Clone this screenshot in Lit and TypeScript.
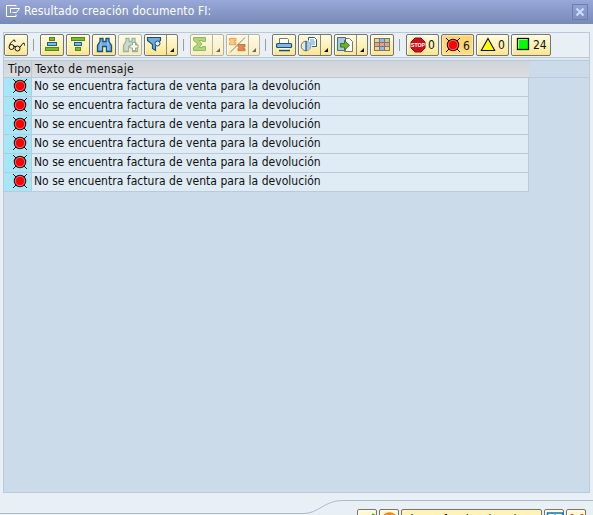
import { LitElement, html, css, svg } from "lit";
import { customElement, property } from "lit/decorators.js";

const statusIcon = svg`<path d="M1 1l3 3M15 1l-3 3M1 15l3-3M15 15l-3-3" stroke="#111" stroke-width="1"/><circle cx="8" cy="8" r="5.700" fill="#f00" stroke="#111" stroke-width="1.100"/><circle cx="8" cy="8" r="4.700" fill="none" stroke="#e88a8a" stroke-width=".8"/>`;
const binoculars = (fill: string, line: string) => svg`<path d="M4 1.500h3v3h3v-3h3v3l2.500 4v6h-5v-5h-4v5h-5v-6L4 4.500z" fill="${fill}" stroke="${line}" stroke-width="1.300"/><path d="M5 5v8M12 5v8" stroke="#b9d6f2" stroke-width=".8"/>`;

const icons: Record<string, unknown> = {
  glasses: svg`<g fill="none" stroke="#111" stroke-width="1"><circle cx="3.500" cy="10" r="2.500"/><circle cx="9.500" cy="11.500" r="2.500"/><path d="M5.800 9.500q1.500-1 2 .500M1.300 9Q2 6 5 3.500q1.500-1.500 2 .500v1M11.800 10.500l3-4q1.500-1.500 1.700 1v1"/></g>`,
  asc: svg`<g stroke-width="1"><rect x="5.500" y=".5" width="5" height="3" fill="#7eb733" stroke="#4d8a1c"/><rect x="3.500" y="5.500" width="9" height="3" fill="#8ab5de" stroke="#14618d"/><rect x="1.500" y="10.500" width="13" height="3" fill="#7eb733" stroke="#4d8a1c"/></g>`,
  desc: svg`<g stroke-width="1"><rect x="1.500" y=".5" width="13" height="3" fill="#7eb733" stroke="#4d8a1c"/><rect x="4.500" y="5.500" width="7" height="3" fill="#8ab5de" stroke="#14618d"/><rect x="5.500" y="10.500" width="5" height="3" fill="#7eb733" stroke="#4d8a1c"/></g>`,
  find: binoculars("#74a9dd", "#14557f"),
  findNext: svg`<g opacity=".6">${binoculars("#a9c8bc", "#5b8d84")}</g><path d="M10.500 5.500h3v2.500h2.500v3h-2.500v2.500h-3V11H8V8h2.500z" fill="#fff" stroke="#9aa68e"/>`,
  filter: svg`<path d="M.5 .5h13v3L8.500 7.500v6l-3-2v-4l-5-4z" fill="#74a9dd" stroke="#14557f" stroke-width="1.200"/><circle cx="10.500" cy="6.500" r="2.500" fill="#dbeaf5" stroke="#14557f"/>`,
  sum: svg`<path d="M.5 .5h12v4h-3v-1H6l3 3.500-3 3.500h3.500v-1h3v4H.5v-3L5 7 .5 3.500z" fill="#b3d577" stroke="#8db866"/>`,
  subtotal: svg`<path d="M1 15.500L16 .5" stroke="#777" stroke-width=".9"/><path d="M.5 1.500h6.500v2.200h-2l1 1-1 1h2v2H.500v-2l1-1-1-1z" fill="#f8c987" stroke="#eea050"/><path d="M9 7.500h7v2.200h-2l1 1-1 1h2v2H9v-2l1-1-1-1z" fill="#e08a52" stroke="#cc7442"/>`,
  print: svg`<path d="M3.500 6.500v-5h8l1 1v4" fill="#fff" stroke="#777"/><rect x=".6" y="6.500" width="15" height="4" rx="1" fill="#8ab5de" stroke="#14557f" stroke-width="1.200"/><path d="M3 13.500h11" stroke="#14557f" stroke-width="1.600"/><path d="M3 11.800h10" stroke="#fff"/>`,
  views: svg`<path d="M7.500 3.500v-3h6l2 2v7H11" fill="#fff" stroke="#14618d"/><path d="M9 3h4M9 5h5M10 7h4" stroke="#5c94bd"/><circle cx="5" cy="9" r="4.800" fill="#e7e9dd" stroke="#777"/><path d="M5 4.200a4.800 4.800 0 0 1 0 9.600z" fill="#a9cbea"/><path d="M5 4v10" stroke="#14557f" stroke-width="1.200"/>`,
  export: svg`<path d="M8.500 1.500h4l3 3v10h-8z" fill="#fff" stroke="#777"/><path d="M.5 .5h8v13h-8z" fill="#a9c8e4" stroke="#456f91"/><path d="M3.500 6.500h4v-3l5 4.800-5 4.800v-3h-4z" fill="#6cb22f" stroke="#397a16"/>`,
  layout: svg`<rect x="0" y="1" width="16" height="13" fill="#777"/>${[["#f6d67c", "#91b9e5", "#b7d277"], ["#e9a08a", "#e9a08a", "#e9a08a"], ["#f6d67c", "#91b9e5", "#f6d67c"]].map((r, y) => r.map((c, x) => svg`<rect x="${1 + x * 5}" y="${2 + y * 4}" width="4" height="3" fill="${c}"/>`))}`,
  stop: svg`<path d="M5 1h6l4 4v6l-4 4H5l-4-4V5z" fill="#c8101a" stroke="#b0000a"/><text x="8" y="10" text-anchor="middle" font-size="5.200" font-weight="700" fill="#fff">STOP</text>`,
  error: statusIcon,
  warning: svg`<path d="M8 1.500L14.700 13.500H1.300z" fill="#ff0" stroke="#111" stroke-width="1.100"/>`,
  ok: svg`<rect x="2.500" y="1.500" width="11" height="11" fill="#0f0" stroke="#111" stroke-width="1.300"/><path d="M3.500 11.500v-9h9" fill="none" stroke="#a8e8a8"/>`,
  check: svg`<path d="M4 9l3 4 6-11" fill="none" stroke="#5d9c3c" stroke-width="3"/>`,
  help: svg`<circle cx="6.500" cy="8" r="7" fill="#ffc928" stroke="#ee7a1c" stroke-width="1.500"/><path d="M3.500 6.500q0-3.500 3-3.500t3 3q0 2-3 3" fill="none" stroke="#e0601c" stroke-width="1.500"/>`,
  info: svg`<rect x="-.5" y="1" width="15" height="14" fill="#fff" stroke="#0b77bd" stroke-width="1.500"/><path d="M7 2.500v2M5 7h3v6" stroke="#0b77bd" stroke-width="2"/>`,
  cancel: svg`<path d="M2 4l9 9M12 4L2 13" stroke="#b8402a" stroke-width="4" stroke-linecap="round"/><path d="M2.500 3.500l8 8M11.500 3.500l-8 8" stroke="#e98570"/>`,
};

@customElement("tool-button")
class ToolButton extends LitElement {
  @property() icon = "";
  @property() label = "";
  @property({ type: Boolean, reflect: true }) menu = false;
  @property({ type: Boolean, reflect: true }) active = false;
  @property({ type: Boolean, reflect: true }) disabled = false;
  static styles = css`
    :host { display: flex; flex: none; box-sizing: border-box; width: 24px; height: 22px; border: 1px solid #77756b; border-radius: 2px; background: linear-gradient(#fffbe0, #fdf1b4 55%, #fae48f); box-shadow: inset 1px 1px #fffdf0; }
    :host([menu]) { width: 34px; }
    :host([active]) { background: linear-gradient(#ffd36e, #ffdc83); box-shadow: inset 0 0 0 1px #ffe9ac; }
    :host([disabled]) { border-color: #b5b39d; background: linear-gradient(#fdf9e4, #f8edc0); }
    .icon { flex: none; width: 17px; height: 16px; margin: 2px 0 0 3px; overflow: visible; font-family: "Liberation Sans", sans-serif; }
    :host([menu]) .icon { margin-left: 2px; }
    .label { margin: 3px 0 0 1px; font: 12px/15px "DejaVu Sans Condensed", "DejaVu Sans", sans-serif; font-stretch: condensed; color: #111; }
    :host([active]) .label { margin-top: 4px; }
    .drop { width: 10px; margin-left: 2px; border-left: 1px solid #8c897a; display: flex; align-items: flex-end; }
    .drop svg { width: 4px; height: 4px; margin: 0 0 3px 3px; }
    :host([disabled]) .drop { opacity: .6; }
  `;
  render() {
    return html`<svg class="icon" viewBox="0 0 17 16" fill="none">${icons[this.icon]}</svg>
      ${this.label ? html`<span class="label">${this.label}</span>` : ""}
      ${this.menu ? html`<span class="drop"><svg viewBox="0 0 4 4"><path d="M4 0v4H0z" fill="#111"/></svg></span>` : ""}`;
  }
}

@customElement("app-root")
class AppRoot extends LitElement {
  static styles = css`
    :host { display: flex; flex-direction: column; width: 593px; height: 515px; overflow: hidden; background: #e8f0f6; font: 12px/15px "DejaVu Sans Condensed", "DejaVu Sans", sans-serif; font-stretch: condensed; color: #111; }
    .title { flex: none; display: flex; box-sizing: border-box; height: 24px; padding: 3px 5px 0 6px; background: linear-gradient(#98a9d9, #7888b7); color: #fff; }
    .title .exit { width: 15px; height: 12px; margin: 2px 3px 0 0; }
    .title .name { flex: 1; padding-top: 1px; white-space: nowrap; letter-spacing: .12px; }
    .title .close { width: 16px; height: 16px; margin-top: 1px; }
    .panel { flex: none; box-sizing: border-box; width: 587px; height: 461px; margin: 8px 0 0 3px; border: 1px solid #bbc9da; background: #cbdbea; }
    .tools { display: flex; box-sizing: border-box; height: 25px; padding: 1px 0 0; gap: 2px; background: #e8f0f6; border-bottom: 1px solid #bbc9da; }
    .tick { flex: none; width: 1px; height: 12px; margin: 5px 4px 0 3px; background: #9a9fa4; }
    .grid { width: 525px; }
    .strip { height: 2px; background: #dde7f0; border-bottom: 1px solid #bbc9da; }
    .rest { height: 17px; box-sizing: border-box; border-bottom: 1px solid #bbc9da; }
    .head, .row { display: grid; grid-template-columns: 28px 1fr; box-sizing: border-box; border-bottom: 1px solid #bbc9da; }
    .band { display: grid; grid-template-columns: 525px 1fr; }
    .head { height: 17px; background: linear-gradient(#cfd4da, #dbdee1); }
    .row { height: 19px; background: #dfebf5; border-right: 1px solid #bbc9da; }
    .cell { box-sizing: border-box; white-space: nowrap; overflow: hidden; padding-left: 2px; }
    .head .cell { padding: 1px 0 0 3px; line-height: 14px; letter-spacing: .28px; }
    .head .first { padding-left: 4px; letter-spacing: 0; }
    .row .cell { padding-top: 1px; letter-spacing: .035px; }
    .cell.first { border-right: 1px solid #bbc9da; }
    .row .first { background: #a6e7f7; padding: 0 0 0 8px; }
    .state { display: block; width: 16px; height: 16px; }
    .footer { flex: 1; display: grid; min-height: 0; overflow: hidden; }
    .edge, .actions { grid-area: 1 / 1; }
    .edge { width: 593px; height: 22px; }
    .actions { display: flex; gap: 2px; padding: 16px 0 0 357px; }
    .actions tool-button { width: 20px; }
    .wide { display: flex; width: 141px; height: 22px; box-sizing: border-box; border: 1px solid #77756b; border-radius: 2px; background: #fff3ba; padding: 3px 5px; white-space: nowrap; }
    .wide svg { width: 10px; height: 14px; margin: 1px 5px 0 0; }
  `;
  render() {
    return html`
      <div class="title">
        <svg class="exit" viewBox="0 0 15 12" fill="none" stroke="#fff"><path d="M10 1.500V.500H.500v11H10v-2M4.500 8V3.500h9l-3 4h-4"/></svg>
        <span class="name">Resultado creación documento FI:</span>
        <svg class="close" viewBox="0 0 16 16" fill="none"><rect x=".5" y=".5" width="15" height="15" stroke="#6d7eae"/><path d="M4.500 4.500l7 7M11.500 4.500l-7 7" stroke="#c8dcff" stroke-width="2.200"/></svg>
      </div>
      <div class="panel">
        <div class="tools">
          <tool-button icon="glasses"></tool-button><i class="tick"></i>
          <tool-button icon="asc"></tool-button><tool-button icon="desc"></tool-button><tool-button icon="find"></tool-button>
          <tool-button icon="findNext" disabled></tool-button><tool-button icon="filter" menu></tool-button><i class="tick"></i>
          <tool-button icon="sum" menu disabled></tool-button><tool-button icon="subtotal" menu disabled></tool-button><i class="tick"></i>
          <tool-button icon="print"></tool-button><tool-button icon="views" menu></tool-button><tool-button icon="export" menu></tool-button><tool-button icon="layout"></tool-button><i class="tick"></i>
          <tool-button style="width:33px" icon="stop" label="0"></tool-button><tool-button style="width:33px" icon="error" label="6" active></tool-button>
          <tool-button style="width:33px" icon="warning" label="0"></tool-button><tool-button style="width:40px" icon="ok" label="24"></tool-button>
        </div>
        <div class="strip"></div>
        <div class="band">
          <div class="head"><span class="cell first">Tipo</span><span class="cell">Texto de mensaje</span></div>
          <div class="rest"></div>
        </div>
        <div class="grid">
          ${Array.from({ length: 6 }, () => html`<div class="row"><span class="cell first"><svg class="state" viewBox="0 0 16 16">${statusIcon}</svg></span><span class="cell">No se encuentra factura de venta para la devolución</span></div>`)}
        </div>
      </div>
      <div class="footer">
        <svg class="edge" viewBox="0 0 593 22" fill="none"><path d="M0 20.500H304C318 20.500 325 7.500 342 7.500H593" stroke="#afbcca"/></svg>
        <div class="actions"><tool-button icon="check"></tool-button><tool-button icon="help"></tool-button><span class="wide"><svg viewBox="0 0 10 14" fill="none" stroke="#111"><circle cx="5" cy="2.500" r="1.700"/><path d="M5 4v9"/></svg>Conf. aviso de sal.</span><tool-button icon="info"></tool-button><tool-button icon="cancel"></tool-button></div>
      </div>`;
  }
}
